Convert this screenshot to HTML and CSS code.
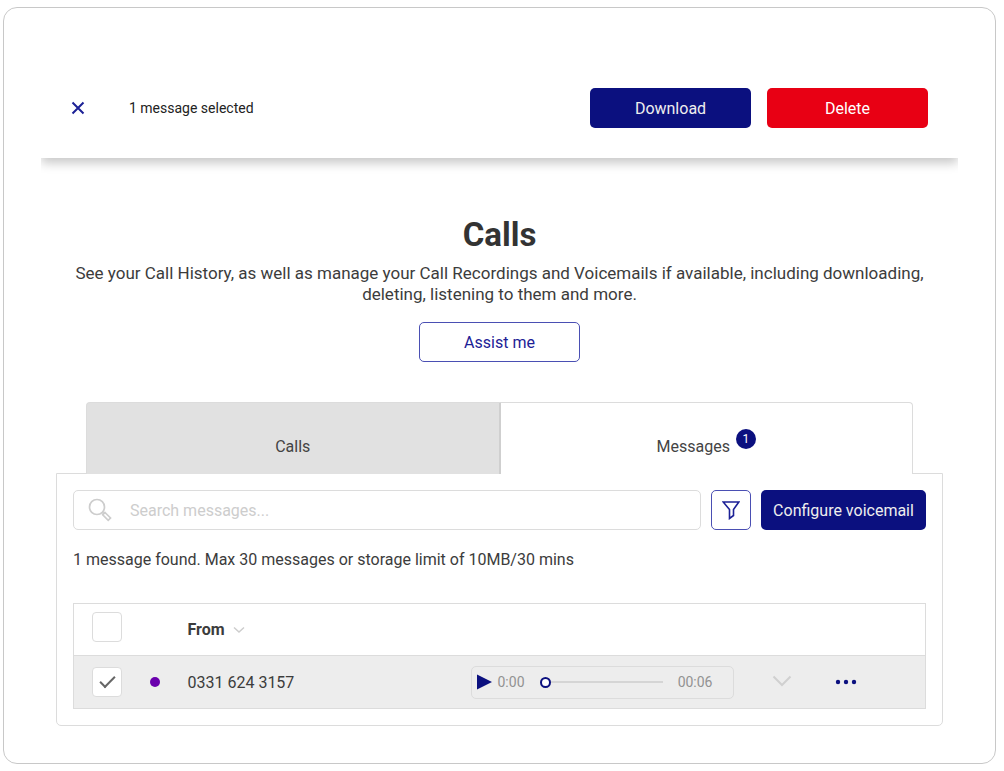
FILE: index.html
```html
<!DOCTYPE html>
<html lang="en">
<head>
    <meta charset="UTF-8">
    <meta name="viewport" content="width=device-width, initial-scale=1.0">
    <title>Calls</title>
    <link rel="stylesheet" href="styles.css">
</head>
<body>
    <div class="frame">
        <div class="action-bar">
            <button type="button" class="close" aria-label="Clear selection">
                <svg width="14" height="14" viewBox="0 0 14 14"><path d="M1.5 1.5l11 11M12.5 1.5l-11 11"/></svg>
            </button>
            <span class="selected">1 message selected</span>
            <button type="button" class="btn btn-primary">Download</button>
            <button type="button" class="btn btn-danger">Delete</button>
        </div>

        <main>
            <header class="intro">
                <h1>Calls</h1>
                <p>See your Call History, as well as manage your Call Recordings and Voicemails if available, including downloading, deleting, listening to them and more.</p>
                <button type="button" class="btn btn-outline">Assist me</button>
            </header>

            <div class="tabs" role="tablist">
                <button type="button" class="tab" role="tab" aria-selected="false">Calls</button>
                <button type="button" class="tab active" role="tab" aria-selected="true">Messages<span class="badge">1</span></button>
            </div>

            <section class="panel">
                <div class="toolbar">
                    <label class="search">
                        <svg width="24" height="24" viewBox="0 0 24 24" aria-hidden="true">
                            <circle cx="9" cy="9" r="7.5"/>
                            <path d="M14.3 14.3l1.7 1.7M17 14.5l5.500 5.500-2.300 2.300-5.500-5.500z"/>
                        </svg>
                        <input type="text" placeholder="Search messages..." aria-label="Search messages">
                    </label>
                    <button type="button" class="btn-filter" aria-label="Filter">
                        <svg width="18" height="20" viewBox="0 0 18 20"><path d="M1.200 2h15.600l-5.300 7.500v6l-4 3v-9z"/></svg>
                    </button>
                    <button type="button" class="btn btn-primary btn-configure">Configure voicemail</button>
                </div>

                <p class="summary">1 message found. Max 30 messages or storage limit of 10MB/30 mins</p>

                <table class="messages">
                    <colgroup>
                        <col class="col-check">
                        <col class="col-dot">
                        <col>
                        <col class="col-player">
                        <col class="col-icon">
                        <col class="col-icon">
                    </colgroup>
                    <thead>
                        <tr>
                            <th class="check"><input type="checkbox" aria-label="Select all"></th>
                            <th></th>
                            <th class="from">From<svg class="sort" width="12" height="8" viewBox="0 0 12 8" aria-hidden="true"><path d="M1 1.500l5 4.500 5-4.500"/></svg></th>
                            <th></th>
                            <th></th>
                            <th></th>
                        </tr>
                    </thead>
                    <tbody>
                        <tr>
                            <td class="check"><input type="checkbox" checked aria-label="Select message"></td>
                            <td class="unread"><span class="dot"></span></td>
                            <td class="from">0331 624 3157</td>
                            <td>
                                <div class="player">
                                    <button type="button" class="play" aria-label="Play">
                                        <svg width="15" height="16" viewBox="0 0 15 16"><path d="M0 .5l15 7.500-15 7.500z"/></svg>
                                    </button>
                                    <span>0:00</span>
                                    <input type="range" min="0" max="6" value="0" aria-label="Position">
                                    <span>00:06</span>
                                </div>
                            </td>
                            <td class="expand">
                                <button type="button" aria-label="Expand">
                                    <svg width="20" height="14" viewBox="0 0 20 14"><path d="M1.500 1.500l8.500 8.500 8.500-8.500"/></svg>
                                </button>
                            </td>
                            <td class="more">
                                <button type="button" aria-label="More options">
                                    <svg width="22" height="6" viewBox="0 0 22 6"><circle cx="3" cy="3" r="2.200"/><circle cx="11" cy="3" r="2.200"/><circle cx="19" cy="3" r="2.200"/></svg>
                                </button>
                            </td>
                        </tr>
                    </tbody>
                </table>
            </section>
        </main>
    </div>
</body>
</html>
```

FILE: styles.css
```css
* {
    box-sizing: border-box;
}

body {
    margin: 7px 8px 7px 3px;
    font-family: Roboto, "Liberation Sans", sans-serif;
    font-size: 16px;
    line-height: 21px;
    color: #3c3c3c;
    background: #fff;
}

button,
input {
    font: inherit;
    color: inherit;
}

button {
    padding: 0;
    border: none;
    background: none;
    cursor: pointer;
}

svg {
    display: block;
    fill: none;
}

.frame {
    border: 1px solid #c8c8c8;
    border-radius: 14px;
    padding: 40px 37px 37px;
}

/* selection bar */
.action-bar {
    display: flex;
    align-items: center;
    gap: 16px;
    height: 110px;
    padding: 10px 30px 0;
    background: #fff;
    box-shadow: 0 5px 10px rgba(0, 0, 0, 0.22);
    clip-path: inset(0 0 -20px 0);
}

.close svg {
    stroke: #1c2196;
    stroke-width: 2;
}

.selected {
    flex: 1;
    margin-left: 28px;
    font-size: 14px;
    color: #222;
}

.btn {
    width: 161px;
    height: 40px;
    border-radius: 5px;
    font-size: 16px;
    text-align: center;
}

.btn-primary {
    background: #0b107f;
    color: #eee;
}

.btn-danger {
    background: #e80014;
    color: #fff;
}

.btn-outline {
    border: 1px solid #4a4fb3;
    color: #1c2196;
}

main {
    padding: 0 15px;
}

.intro {
    display: flex;
    flex-direction: column;
    align-items: center;
    padding: 57px 16px 40px;
    text-align: center;
}

h1 {
    margin: 0 0 8px;
    font-size: 33px;
    line-height: 40px;
    font-weight: 700;
    color: #333;
}

.intro p {
    margin: 0 0 17px;
    font-size: 17px;
}

/* tabs */
.tabs {
    display: flex;
    margin: 0 30px -1px;
    position: relative;
}

.tab {
    display: flex;
    flex: 1;
    align-items: center;
    justify-content: center;
    height: 72px;
    padding-top: 16px;
    border: 1px solid #dcdcdc;
    border-bottom: none;
    border-radius: 4px 0 0 0;
    background: #e1e1e1;
    color: #444;
}

.tab:not(.active) {
    border-right: 2px solid #cfcfcf;
}

.tab.active {
    border-left: none;
    border-radius: 0 4px 0 0;
    background: #fff;
}

.badge {
    width: 20px;
    height: 20px;
    margin: 0 0 16px 6px;
    border-radius: 50%;
    background: #0b107f;
    color: #fff;
    font-size: 12px;
    line-height: 20px;
}

.panel {
    padding: 16px;
    border: 1px solid #dcdcdc;
    border-radius: 0 0 5px 5px;
}

.toolbar {
    display: flex;
    gap: 10px;
}

.search {
    display: flex;
    flex: 1;
    align-items: center;
    gap: 18px;
    height: 40px;
    padding: 0 14px;
    border: 1px solid #dcdcdc;
    border-radius: 5px;
}

.search svg {
    stroke: #cdcdcd;
    stroke-width: 1.7;
}

.search input {
    flex: 1;
    min-width: 0;
    padding: 0;
    border: none;
    outline: none;
    background: none;
}

.search input::placeholder {
    color: #cdcdcd;
    opacity: 1;
}

.btn-filter {
    display: flex;
    align-items: center;
    justify-content: center;
    width: 40px;
    height: 40px;
    border: 1px solid #4a4fb3;
    border-radius: 5px;
}

.btn-filter svg {
    stroke: #1c2196;
    stroke-width: 1.6;
}

.btn-configure {
    width: 165px;
}

.summary {
    margin: 19px 0 33px;
}

/* message list */
.messages {
    width: 100%;
    table-layout: fixed;
    border-collapse: collapse;
    border: 1px solid #dcdcdc;
}

.col-check {
    width: 66px;
}

.col-dot {
    width: 30px;
}

.col-player {
    width: 263px;
}

.col-icon {
    width: 96px;
}

.messages tr {
    height: 53px;
    border-bottom: 1px solid #dcdcdc;
}

.messages thead tr {
    height: 52px;
}

.messages tbody tr {
    background: #ededed;
}

.messages th,
.messages td {
    padding: 0;
    text-align: left;
    vertical-align: middle;
}

.messages .check {
    padding-left: 18px;
}

.messages th.check {
    padding-bottom: 5px;
}

.check input {
    display: grid;
    place-content: center;
    appearance: none;
    width: 30px;
    height: 30px;
    margin: 0;
    border: 1px solid #dcdcdc;
    border-radius: 4px;
    background: #fff;
}

.check input:checked::before {
    content: "";
    width: 13px;
    height: 6px;
    margin-bottom: 4px;
    border-left: 2px solid #666;
    border-bottom: 2px solid #666;
    transform: rotate(-45deg);
}

.messages .from {
    padding-left: 18px;
}

.sort {
    display: inline-block;
    margin-left: 8px;
    vertical-align: 1px;
    stroke: #cdcdcd;
    stroke-width: 1.5;
}

.dot {
    display: block;
    width: 10px;
    height: 10px;
    margin: 0 auto;
    border-radius: 50%;
    background: #6a00ad;
}

.player {
    display: flex;
    align-items: center;
    height: 33px;
    padding: 0 20px 0 5px;
    border: 1px solid #dcdcdc;
    border-radius: 5px;
    font-size: 14px;
    color: #929292;
}

.play {
    margin-right: 6px;
}

.play svg {
    fill: #0b107f;
}

.player input {
    appearance: none;
    flex: 1;
    min-width: 0;
    height: 12px;
    margin: 0 15px;
    background: linear-gradient(#d5d5d5, #d5d5d5) center / 100% 2px no-repeat;
}

.player input::-webkit-slider-thumb {
    appearance: none;
    width: 11px;
    height: 11px;
    border: 2px solid #0b107f;
    border-radius: 50%;
    background: #fff;
}

.expand svg {
    stroke: #d0d0d0;
    stroke-width: 2;
}

.expand button {
    display: block;
    margin: 0 auto;
}

.more button {
    display: block;
}

.messages .more {
    padding-left: 5px;
}

.more svg {
    fill: #0b107f;
}
```
